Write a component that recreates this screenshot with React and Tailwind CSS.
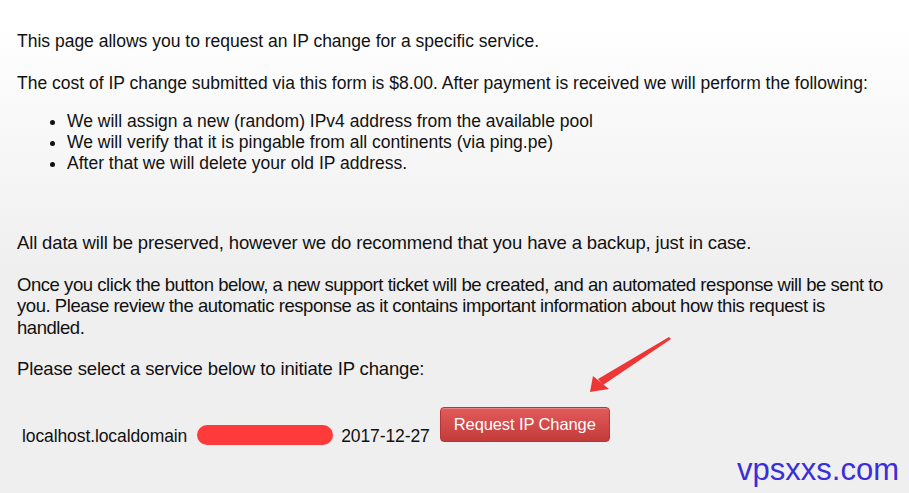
import React from 'react'

const STEPS = [
    'We will assign a new (random) IPv4 address from the available pool',
    'We will verify that it is pingable from all continents (via ping.pe)',
    'After that we will delete your old IP address.',
]

function Arrow() {
    return (
        <svg className="absolute left-[580px] top-[334px]" width="100" height="64" viewBox="0 0 100 64">
            <path d="M89 3 L91 5 L23 51 L18 45 Z" fill="#ee3636" />
            <path d="M10 58 L13 42 L29 55 Z" fill="#ee3636" />
        </svg>
    )
}

export default function App() {
    return (
        <div className="relative w-[909px] h-[493px] overflow-hidden bg-gradient-to-b from-white from-[5%] to-[#efefef] to-[55%] text-[#111] font-['Liberation_Sans',Arial,sans-serif]">
            <div className="pl-[17px] pt-[31px]">
                <div className="text-[17.5px] leading-[21px]">
                    <p>This page allows you to request an IP change for a specific service.</p>
                    <p className="mt-[21px]">The cost of IP change submitted via this form is $8.00. After payment is received we will perform the following:</p>
                    <ul className="mt-[17px] pl-[50px] list-disc">
                        {STEPS.map(s => (
                            <li key={s}>{s}</li>
                        ))}
                    </ul>
                </div>

                <div className="mt-[58px] w-[871px] text-[18.5px] leading-[21.5px] tracking-[-0.15px]">
                    <p>All data will be preserved, however we do recommend that you have a backup, just in case.</p>
                    <p className="mt-[20px] tracking-[-0.45px]">Once you click the button below, a new support ticket will be created, and an automated response will be sent to you. Please review the automatic response as it contains important information about how this request is handled.</p>
                    <p className="mt-[20px]">Please select a service below to initiate IP change:</p>
                </div>

                <div className="mt-[27px] flex items-end pl-[5px] text-[17.5px] tracking-[-0.1px]">
                    <span className="leading-[22px] mb-[2px]">localhost.localdomain</span>
                    <span className="ml-[10px] mb-[4px] w-[136px] h-[20px] rounded-full bg-[#ff3a3a]"></span>
                    <span className="ml-[8px] leading-[22px] mb-[2px]">2017-12-27</span>
                    <button className="ml-[10px] mb-[7px] w-[170px] h-[35px] rounded-[4px] border border-[#b33] bg-gradient-to-b from-[#e35a5a] to-[#c33a3a] text-white text-[16.5px] shadow-[inset_0_1px_0_rgba(255,255,255,0.25)]">
                        Request IP Change
                    </button>
                </div>
            </div>

            <Arrow />

            <div className="absolute right-[10px] bottom-[5px] text-[31px] leading-[36px] text-[#3b2ed8] font-['Liberation_Sans',Arial,sans-serif]">
                vpsxxs.com
            </div>
        </div>
    )
}
